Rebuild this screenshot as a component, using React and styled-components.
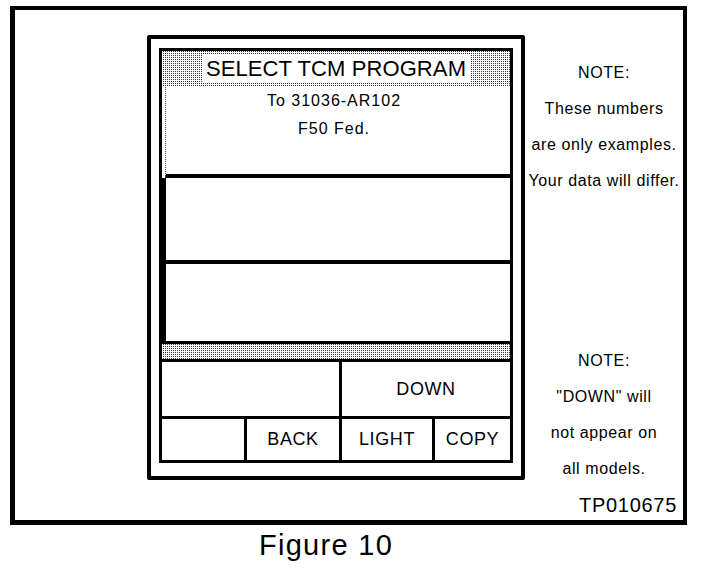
import styled, { createGlobalStyle } from "styled-components";

const GlobalStyle = createGlobalStyle`
  body {
    margin: 0;
    background: #fff;
    font-family: "Liberation Sans", Arial, sans-serif;
    color: #000;
  }
`;

const dither = `
  background-color: #fff;
  background-image: repeating-conic-gradient(#333 0 25%, #fff 0 100%);
  background-size: 2px 2px;
`;

const Page = styled.div`
  width: 704px;
  height: 574px;
  padding: 6px 0 0 10px;
  box-sizing: border-box;
`;

const Frame = styled.div`
  box-sizing: border-box;
  width: 677px;
  height: 519px;
  border-style: solid;
  border-color: #000;
  border-width: 4px 4px 5px 5px;
  padding: 25px 0 0 132px;
  display: grid;
  grid-template-columns: 378px minmax(0, 1fr);
`;

const Device = styled.div`
  box-sizing: border-box;
  height: 445px;
  border: 4px solid #000;
  border-radius: 2px;
  padding: 9px 8px 13px 8px;
`;

const Screen = styled.div`
  box-sizing: border-box;
  height: 415px;
  border: 3px solid #000;
  display: flex;
  flex-direction: column;
`;

const Header = styled.div`
  height: 36px;
  ${dither}
  display: flex;
  align-items: center;
  justify-content: center;
`;

const HeaderLabel = styled.span`
  background: #fff;
  padding: 0 4px;
  font-size: 22px;
  line-height: 27px;
  letter-spacing: 0.1px;
`;

const ListRow = styled.div`
  box-sizing: border-box;
  height: ${(p) => p.$h}px;
  border-bottom: ${(p) => p.$line}px solid #000;
  border-left: ${(p) => (p.$thick ? "4px solid #000" : "1px dotted #444")};
  margin-left: ${(p) => (p.$thick ? "0" : "3px")};
  padding-right: 8px;
  text-align: center;
  font-size: 16px;
  line-height: 28px;
  letter-spacing: 1px;
`;

const Band = styled.div`
  height: 15px;
  ${dither}
  border-bottom: 3px solid #000;
`;

const ButtonRow = styled.div`
  display: grid;
  grid-template-columns: ${(p) => p.$cols};
  height: ${(p) => p.$h}px;
  border-bottom: ${(p) => (p.$last ? "none" : "3px solid #000")};
`;

const Key = styled.div`
  display: flex;
  align-items: center;
  justify-content: center;
  border-right: ${(p) => (p.$end ? "none" : "3px solid #000")};
  font-size: 18px;
  letter-spacing: 0.6px;
`;

const Notes = styled.div`
  display: flex;
  flex-direction: column;
  padding: 20px 0 4px 0;
  text-align: center;
`;

const NoteGroup = styled.div`
  margin-top: ${(p) => p.$top}px;
  font-size: 16px;
  line-height: 36px;
  letter-spacing: 0.6px;
  white-space: nowrap;
`;

const Code = styled.div`
  margin-top: auto;
  padding-right: 6px;
  text-align: right;
  font-size: 20px;
  line-height: 22px;
  letter-spacing: 0.7px;
`;

const Caption = styled.div`
  width: 677px;
  padding-right: 45px;
  box-sizing: border-box;
  margin-top: 3px;
  text-align: center;
  font-size: 29px;
  line-height: 34px;
  letter-spacing: 1.3px;
`;

export default function App() {
  return (
    <Page>
      <GlobalStyle />
      <Frame>
        <Device>
          <Screen>
            <Header>
              <HeaderLabel>SELECT TCM PROGRAM</HeaderLabel>
            </Header>
            <ListRow $h={92} $line={4}>
              To 31036-AR102
              <br />
              F50 Fed.
            </ListRow>
            <ListRow $h={87} $line={4} $thick />
            <ListRow $h={80} $line={3} $thick />
            <Band />
            <ButtonRow $cols="180px 1fr" $h={55}>
              <Key />
              <Key $end>DOWN</Key>
            </ButtonRow>
            <ButtonRow $cols="85px 95px 93px 1fr" $h={41} $last>
              <Key />
              <Key>BACK</Key>
              <Key>LIGHT</Key>
              <Key $end>COPY</Key>
            </ButtonRow>
          </Screen>
        </Device>
        <Notes>
          <NoteGroup $top={0}>
            NOTE:
            <br />
            These numbers
            <br />
            are only examples.
            <br />
            Your data will differ.
          </NoteGroup>
          <NoteGroup $top={144}>
            NOTE:
            <br />
            "DOWN" will
            <br />
            not appear on
            <br />
            all models.
          </NoteGroup>
          <Code>TP010675</Code>
        </Notes>
      </Frame>
      <Caption>Figure 10</Caption>
    </Page>
  );
}
